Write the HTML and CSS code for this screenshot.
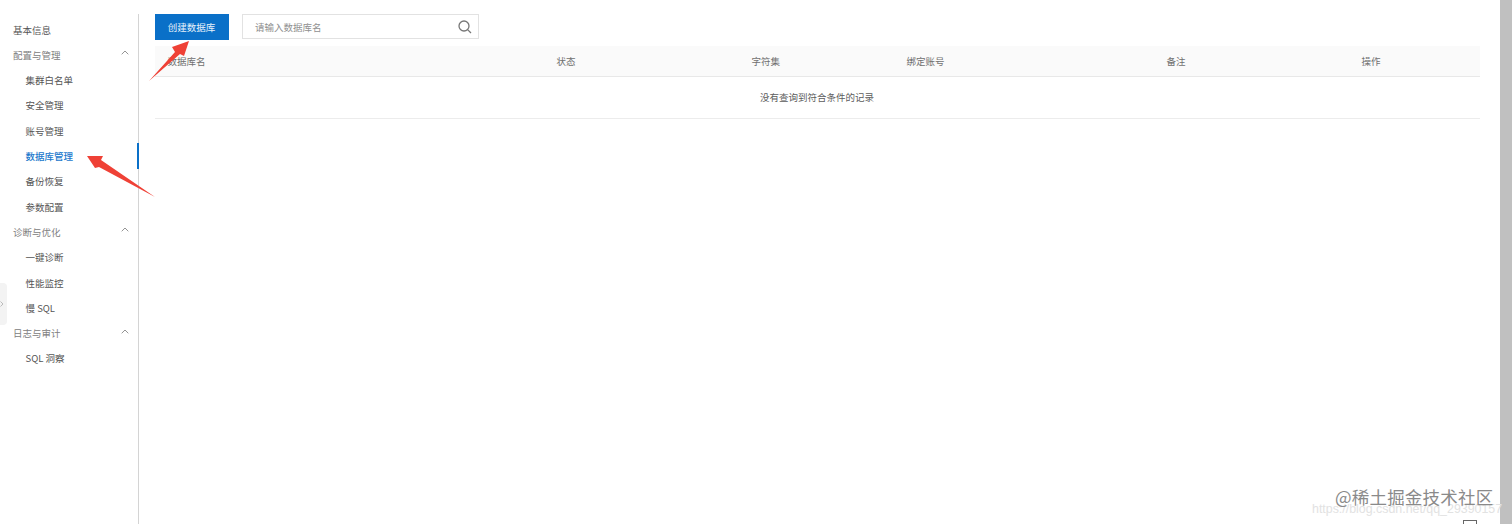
FILE: index.html
```html
<!DOCTYPE html>
<html lang="zh-CN">
<head>
<meta charset="utf-8">
<title>数据库管理</title>
<link rel="stylesheet" href="styles.css">
</head>
<body>
<div class="page">
  <aside class="sidebar">
    <ul class="menu">
      <li class="item">基本信息</li>
      <li class="item group">配置与管理<svg class="chev" viewBox="0 0 8 5"><path d="M.7 4.3 4 1l3.3 3.3"/></svg></li>
      <li class="item sub">集群白名单</li>
      <li class="item sub">安全管理</li>
      <li class="item sub">账号管理</li>
      <li class="item sub active">数据库管理</li>
      <li class="item sub">备份恢复</li>
      <li class="item sub">参数配置</li>
      <li class="item group">诊断与优化<svg class="chev" viewBox="0 0 8 5"><path d="M.7 4.3 4 1l3.3 3.3"/></svg></li>
      <li class="item sub">一键诊断</li>
      <li class="item sub">性能监控</li>
      <li class="item sub">慢 SQL</li>
      <li class="item group">日志与审计<svg class="chev" viewBox="0 0 8 5"><path d="M.7 4.3 4 1l3.3 3.3"/></svg></li>
      <li class="item sub">SQL 洞察</li>
    </ul>
  </aside>
  <main class="main">
    <div class="toolbar">
      <button class="create">创建数据库</button>
      <div class="search">
        <span class="placeholder">请输入数据库名</span>
        <svg class="search-icon" viewBox="0 0 14 14"><circle cx="6" cy="6" r="5"/><path d="M9.6 9.6 13 13"/></svg>
      </div>
    </div>
    <table class="table">
      <colgroup>
        <col class="c1"><col class="c2"><col class="c3"><col class="c4"><col class="c5"><col class="c6">
      </colgroup>
      <thead>
        <tr><th>数据库名</th><th>状态</th><th>字符集</th><th>绑定账号</th><th>备注</th><th>操作</th></tr>
      </thead>
      <tbody>
        <tr><td colspan="6" class="empty">没有查询到符合条件的记录</td></tr>
      </tbody>
    </table>
  </main>
  <div class="scrollbar"></div>
</div>
<div class="handle"><svg class="handle-icon" viewBox="0 0 4 6"><path d="M.5.5 3 3 .5 5.500"/></svg></div>
<svg class="arrows" viewBox="0 0 1512 524" width="1512" height="524">
  <polygon points="149,81 175,52 172,47 189,41 184,56 180,54"/>
  <polygon points="155,197 99,167 95,168 87,156 103,156 101,160"/>
</svg>
<div class="mark-url">https://blog.csdn.net/qq_29390157</div>
<div class="mark">@稀土掘金技术社区</div>
<div class="corner"></div>
</body>
</html>
```
FILE: styles.css
```css
* { box-sizing: border-box; }
html, body { margin: 0; height: 100%; overflow: hidden; background: #fff; }
body { font-family: "Noto Sans CJK SC", "Liberation Sans", sans-serif; color: #555; }
.page { display: flex; height: 524px; padding-top: 14px; }
.sidebar { width: 139px; flex: none; border-right: 1px solid #d4d4d4; }
.menu { list-style: none; margin: 0; padding: 2.9px 0 0; }
.item { position: relative; display: flex; align-items: center; justify-content: space-between; height: 25.3px; padding: 0 9px 0 13px; font-size: 9.5px; color: #555; white-space: nowrap; }
.group { color: #808080; }
.sub { padding-left: 25.5px; }
.active { color: #1a78cc; font-weight: 500; }
.active::after { content: ""; position: absolute; right: -1px; top: 0; width: 2px; height: 100%; background: #0a70c8; }
.chev { width: 8px; height: 5px; margin-top: -4px; fill: none; stroke: #888; stroke-width: .9; }
.main { flex: 1; padding-left: 15.5px; padding-right: 20px; min-width: 0; }
.toolbar { display: flex; gap: 13px; height: 32px; align-items: flex-start; }
.create { width: 74px; height: 26px; padding: 0; border: 0; background: #0a70c8; color: #e8f2fb; font: inherit; font-size: 9.5px; }
.search { width: 237px; height: 25px; display: flex; align-items: center; justify-content: space-between; padding: 0 6px 0 12.5px; border: 1px solid #e2e2e2; }
.placeholder { font-size: 9.5px; color: #909090; }
.search-icon { width: 14px; height: 14px; fill: none; stroke: #777; stroke-width: 1.3; }
.table { width: 1325px; border-collapse: collapse; table-layout: fixed; font-size: 9.5px; }
.c1 { width: 402px; } .c2 { width: 195px; } .c3 { width: 155px; } .c4 { width: 260px; } .c5 { width: 195px; } .c6 { width: 118px; }
.table th { height: 30px; padding: 0; background: #fafafa; border-bottom: 1px solid #e8e8e8; font-weight: 400; text-align: left; color: #707070; }
.table th:first-child { padding-left: 13px; }
.empty { height: 42px; padding: 0; text-align: center; color: #5c5c5c; border-bottom: 1px solid #ececec; }
.scrollbar { position: absolute; top: 0; right: 0; width: 12px; height: 524px; background: #c0c0c0; }
.handle { position: absolute; left: 0; top: 283px; width: 7px; height: 42px; display: flex; align-items: center; background: #f3f3f3; border-radius: 0 4px 4px 0; }
.handle-icon { width: 4px; height: 6px; fill: none; stroke: #bbb; }
.arrows { position: absolute; left: 0; top: 0; pointer-events: none; }
.arrows polygon { fill: #ef4136; }
.mark { position: absolute; left: 1335px; top: 486px; font-size: 17.5px; line-height: 22px; letter-spacing: .2px; color: #8a8a8a; white-space: nowrap; }
.mark-url { position: absolute; left: 1312px; top: 502px; font-family: "Liberation Sans", sans-serif; font-size: 12.4px; line-height: 14px; color: #e2e2e2; white-space: nowrap; }
.corner { position: absolute; left: 1463px; top: 520px; width: 14px; height: 4px; border: 1px solid #666; border-bottom: 0; }
```
